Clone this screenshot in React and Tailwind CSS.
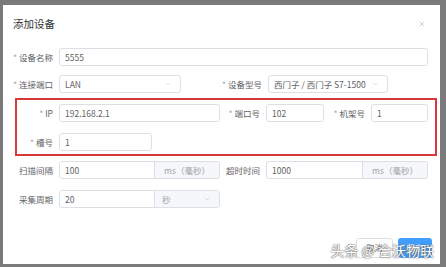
import React from "react";
import { ChevronDown, X } from "lucide-react";

const font = { fontFamily: '"Noto Sans CJK SC", "Liberation Sans", sans-serif' };

function Label({ text, w, required = true }) {
  return (
    <div className={`${w} shrink-0 pr-[6px] text-right text-[8.5px] text-[#606266] whitespace-nowrap`}>
      {required && <span className="text-[#a8a8a8] mr-[2px]">*</span>}
      {text}
    </div>
  );
}

function Input({ value, w }) {
  return (
    <div className={`${w} h-[18px] shrink-0 border border-[#dcdfe6] rounded-[3px] bg-white flex items-center px-[5px] text-[8.5px] text-[#606266] whitespace-nowrap`}>
      {value}
    </div>
  );
}

function Select({ value, w }) {
  return (
    <div className={`${w} h-[18px] shrink-0 border border-[#dcdfe6] rounded-[3px] bg-white flex items-center justify-between pl-[5px] pr-[8px] text-[8.5px] text-[#606266] whitespace-nowrap`}>
      <span>{value}</span>
      <ChevronDown size={8} strokeWidth={1.5} className="text-[#c0c4cc]" />
    </div>
  );
}

function Appended({ value, append, w, aw, select }) {
  return (
    <div className={`${w} h-[18px] shrink-0 border border-[#dcdfe6] rounded-[3px] bg-white flex text-[8.5px] whitespace-nowrap`}>
      <div className="flex-1 flex items-center px-[5px] text-[#606266]">{value}</div>
      <div className={`${aw} border-l border-[#dcdfe6] bg-[#f5f7fa] rounded-r-[3px] flex items-center ${select ? "justify-between pl-[7px] pr-[8px]" : "justify-center"} text-[#a0a3a8]`}>
        <span>{append}</span>
        {select && <ChevronDown size={8} strokeWidth={1.5} className="text-[#c0c4cc]" />}
      </div>
    </div>
  );
}

export default function App() {
  return (
    <div className="w-[446px] h-[267px] bg-[#7a7a7a] pt-[5px] pl-[3px] pr-[6px] pb-[3px] overflow-hidden" style={font}>
      <div className="relative h-full bg-white flex flex-col">
        <div className="flex items-center justify-between pt-[10px] pl-[10px] pr-[14px] h-[28px]">
          <span className="text-[10.5px] text-[#303133]">添加设备</span>
          <X size={8} strokeWidth={1.5} className="text-[#a0a3a8]" />
        </div>

        <div className="flex flex-col pt-[15px]">
          <div className="flex items-center">
            <Label text="设备名称" w="w-[56px]" />
            <Input value="5555" w="w-[369px]" />
          </div>

          <div className="flex items-center mt-[9px]">
            <Label text="连接端口" w="w-[56px]" />
            <Select value="LAN" w="w-[122px]" />
            <div className="w-[40px] shrink-0" />
            <Label text="设备型号" w="w-[47px]" />
            <Select value="西门子 / 西门子 S7-1500" w="w-[120px]" />
          </div>

          <div className="ml-[12px] mt-[5px] w-[422px] border-2 border-[#d9383a] pt-[4px] pb-[3px] flex flex-col gap-[11px]">
            <div className="flex items-center">
              <Label text="IP" w="w-[42px]" />
              <Input value="192.168.2.1" w="w-[161px]" />
              <Label text="端口号" w="w-[46px]" />
              <Input value="102" w="w-[58px]" />
              <Label text="机架号" w="w-[47px]" />
              <Input value="1" w="w-[57px]" />
            </div>
            <div className="flex items-center">
              <Label text="槽号" w="w-[42px]" />
              <Input value="1" w="w-[93px]" />
            </div>
          </div>

          <div className="flex items-center mt-[5px]">
            <Label text="扫描间隔" w="w-[56px]" required={false} />
            <Appended value="100" append="ms（毫秒）" w="w-[161px]" aw="w-[65px]" />
            <Label text="超时时间" w="w-[46px]" required={false} />
            <Appended value="1000" append="ms（毫秒）" w="w-[162px]" aw="w-[65px]" />
          </div>

          <div className="flex items-center mt-[11px]">
            <Label text="采集周期" w="w-[56px]" required={false} />
            <Appended value="20" append="秒" w="w-[161px]" aw="w-[65px]" select />
          </div>
        </div>

        <div className="mt-auto mb-[6px] flex justify-end gap-[5px] pr-[8px]">
          <div className="w-[37px] h-[20px] border border-[#dcdfe6] rounded-[3px] flex items-center justify-center text-[8px] text-[#606266]">
            取消
          </div>
          <div className="w-[34px] h-[20px] bg-[#409eff] rounded-[3px] flex items-center justify-center text-[8px] text-white">
            确定
          </div>
        </div>

        <div className="absolute right-[6px] bottom-[3px] text-[14px] text-white [text-shadow:0_0_1px_#444,0_0_2px_#666] whitespace-nowrap">
          头条 @ 合沃物联
        </div>
      </div>
    </div>
  );
}
